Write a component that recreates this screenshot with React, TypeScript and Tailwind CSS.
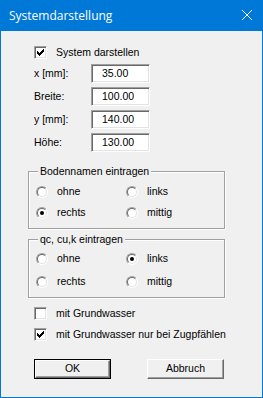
import React from 'react'

const FONT = "font-['Liberation_Sans',Arial,sans-serif] text-[10.5px] text-black"

function CheckBox({ checked, label }: { checked: boolean; label: string }) {
  return (
    <div className="flex h-[13px] items-center">
      <div className="relative h-[13px] w-[13px] shrink-0 border border-t-[#a0a0a0] border-l-[#a0a0a0] border-r-white border-b-white bg-white shadow-[inset_1px_1px_0_#696969,inset_-1px_-1px_0_#e3e3e3]">
        {checked && (
          <svg width="13" height="13" className="absolute -left-px -top-px" shapeRendering="crispEdges">
            <rect x="3" y="5" width="1" height="3" fill="#000" />
            <rect x="4" y="6" width="1" height="3" fill="#000" />
            <rect x="5" y="7" width="1" height="3" fill="#000" />
            <rect x="6" y="6" width="1" height="3" fill="#000" />
            <rect x="7" y="5" width="1" height="3" fill="#000" />
            <rect x="8" y="4" width="1" height="3" fill="#000" />
            <rect x="9" y="3" width="1" height="3" fill="#000" />
          </svg>
        )}
      </div>
      <span className="ml-[9px] whitespace-nowrap leading-[13px]">{label}</span>
    </div>
  )
}

function Radio({ checked, label }: { checked: boolean; label: string }) {
  return (
    <div className="flex h-[13px] items-center">
      <div className="relative ml-px h-[12px] w-[12px] shrink-0 rounded-full border border-t-[#a0a0a0] border-l-[#a0a0a0] border-r-white border-b-white">
        <div className="flex h-full w-full items-center justify-center rounded-full border border-t-[#696969] border-l-[#696969] border-r-[#e3e3e3] border-b-[#e3e3e3] bg-white">
          {checked && <div className="h-[4px] w-[4px] rounded-full bg-black" />}
        </div>
      </div>
      <span className="ml-[9px] whitespace-nowrap leading-[13px]">{label}</span>
    </div>
  )
}

function Field({ label, value }: { label: string; value: string }) {
  return (
    <div className="flex h-[19px] items-center">
      <span className="w-[57px] leading-[13px]">{label}</span>
      <div className="flex h-[19px] w-[59px] items-center border border-t-[#a0a0a0] border-l-[#a0a0a0] border-r-white border-b-white bg-white pl-[10px] shadow-[inset_1px_1px_0_#696969,inset_-1px_-1px_0_#e3e3e3]">
        {value}
      </div>
    </div>
  )
}

function Group({ title, rows, className }: { title: string; rows: [string, boolean][]; className: string }) {
  return (
    <fieldset className={`ml-[27px] w-[197px] border border-[#a0a0a0] p-0 shadow-[inset_1px_1px_0_#fff,1px_1px_0_#fff] ${className}`}>
      <legend className="ml-[9px] bg-[#f0f0f0] px-[2px] leading-[13px]">{title}</legend>
      <div className="grid grid-cols-[90px_1fr] pl-[6px]">
        {rows.map(([l, c]) => (
          <Radio key={l} label={l} checked={c} />
        ))}
      </div>
    </fieldset>
  )
}

export default function App() {
  return (
    <div className={`flex h-[398px] w-[263px] flex-col border border-[#0078d7] bg-[#f0f0f0] ${FONT}`}>
      {/* title bar */}
      <div className="flex h-[30px] shrink-0 justify-between bg-[#0078d7] pl-[8px] pr-[10px]">
        <span className="mt-[6px] font-['Open_Sans',sans-serif] text-[12px] leading-[17px] text-white">Systemdarstellung</span>
        <svg width="10" height="10" className="mt-[9px]" shapeRendering="crispEdges">
          <path d="M0 0 L10 10 M10 0 L0 10" stroke="#fff" strokeWidth="1.1" />
        </svg>
      </div>

      <div className="flex flex-col">
        <div className="ml-[33px] mt-[15px]">
          <CheckBox checked label="System darstellen" />
        </div>

        <div className="ml-[33px] mt-[5px] flex flex-col gap-[4px]">
          <Field label="x [mm]:" value="35.00" />
          <Field label="Breite:" value="100.00" />
          <Field label="y [mm]:" value="140.00" />
          <Field label="Höhe:" value="130.00" />
        </div>

        <Group
          title="Bodennamen eintragen"
          className="mt-[13px] pb-[9px] [&>div]:gap-y-[8px] [&>div]:pt-[7px]"
          rows={[['ohne', false], ['links', false], ['rechts', true], ['mittig', false]]}
        />

        <Group
          title="qc, cu,k eintragen"
          className="mt-[4px] pb-[9px] [&>div]:gap-y-[10px] [&>div]:pt-[6px]"
          rows={[['ohne', false], ['links', true], ['rechts', false], ['mittig', false]]}
        />

        <div className="ml-[33px] mt-[9px] flex flex-col gap-[8px]">
          <CheckBox checked={false} label="mit Grundwasser" />
          <CheckBox checked label="mit Grundwasser nur bei Zugpfählen" />
        </div>

        <div className="ml-[33px] mt-[18px] flex gap-[36px]">
          <button className="h-[20px] w-[77px] border border-black bg-[#f0f0f0] p-0">
            <div className="flex h-full w-full items-center justify-center border border-t-white border-l-white border-r-[#696969] border-b-[#696969] shadow-[inset_-1px_-1px_0_#a0a0a0]">
              OK
            </div>
          </button>
          <button className="flex h-[20px] w-[77px] items-center justify-center border border-t-white border-l-white border-r-[#696969] border-b-[#696969] bg-[#f0f0f0] p-0 shadow-[inset_-1px_-1px_0_#a0a0a0]">
            Abbruch
          </button>
        </div>
      </div>
    </div>
  )
}
